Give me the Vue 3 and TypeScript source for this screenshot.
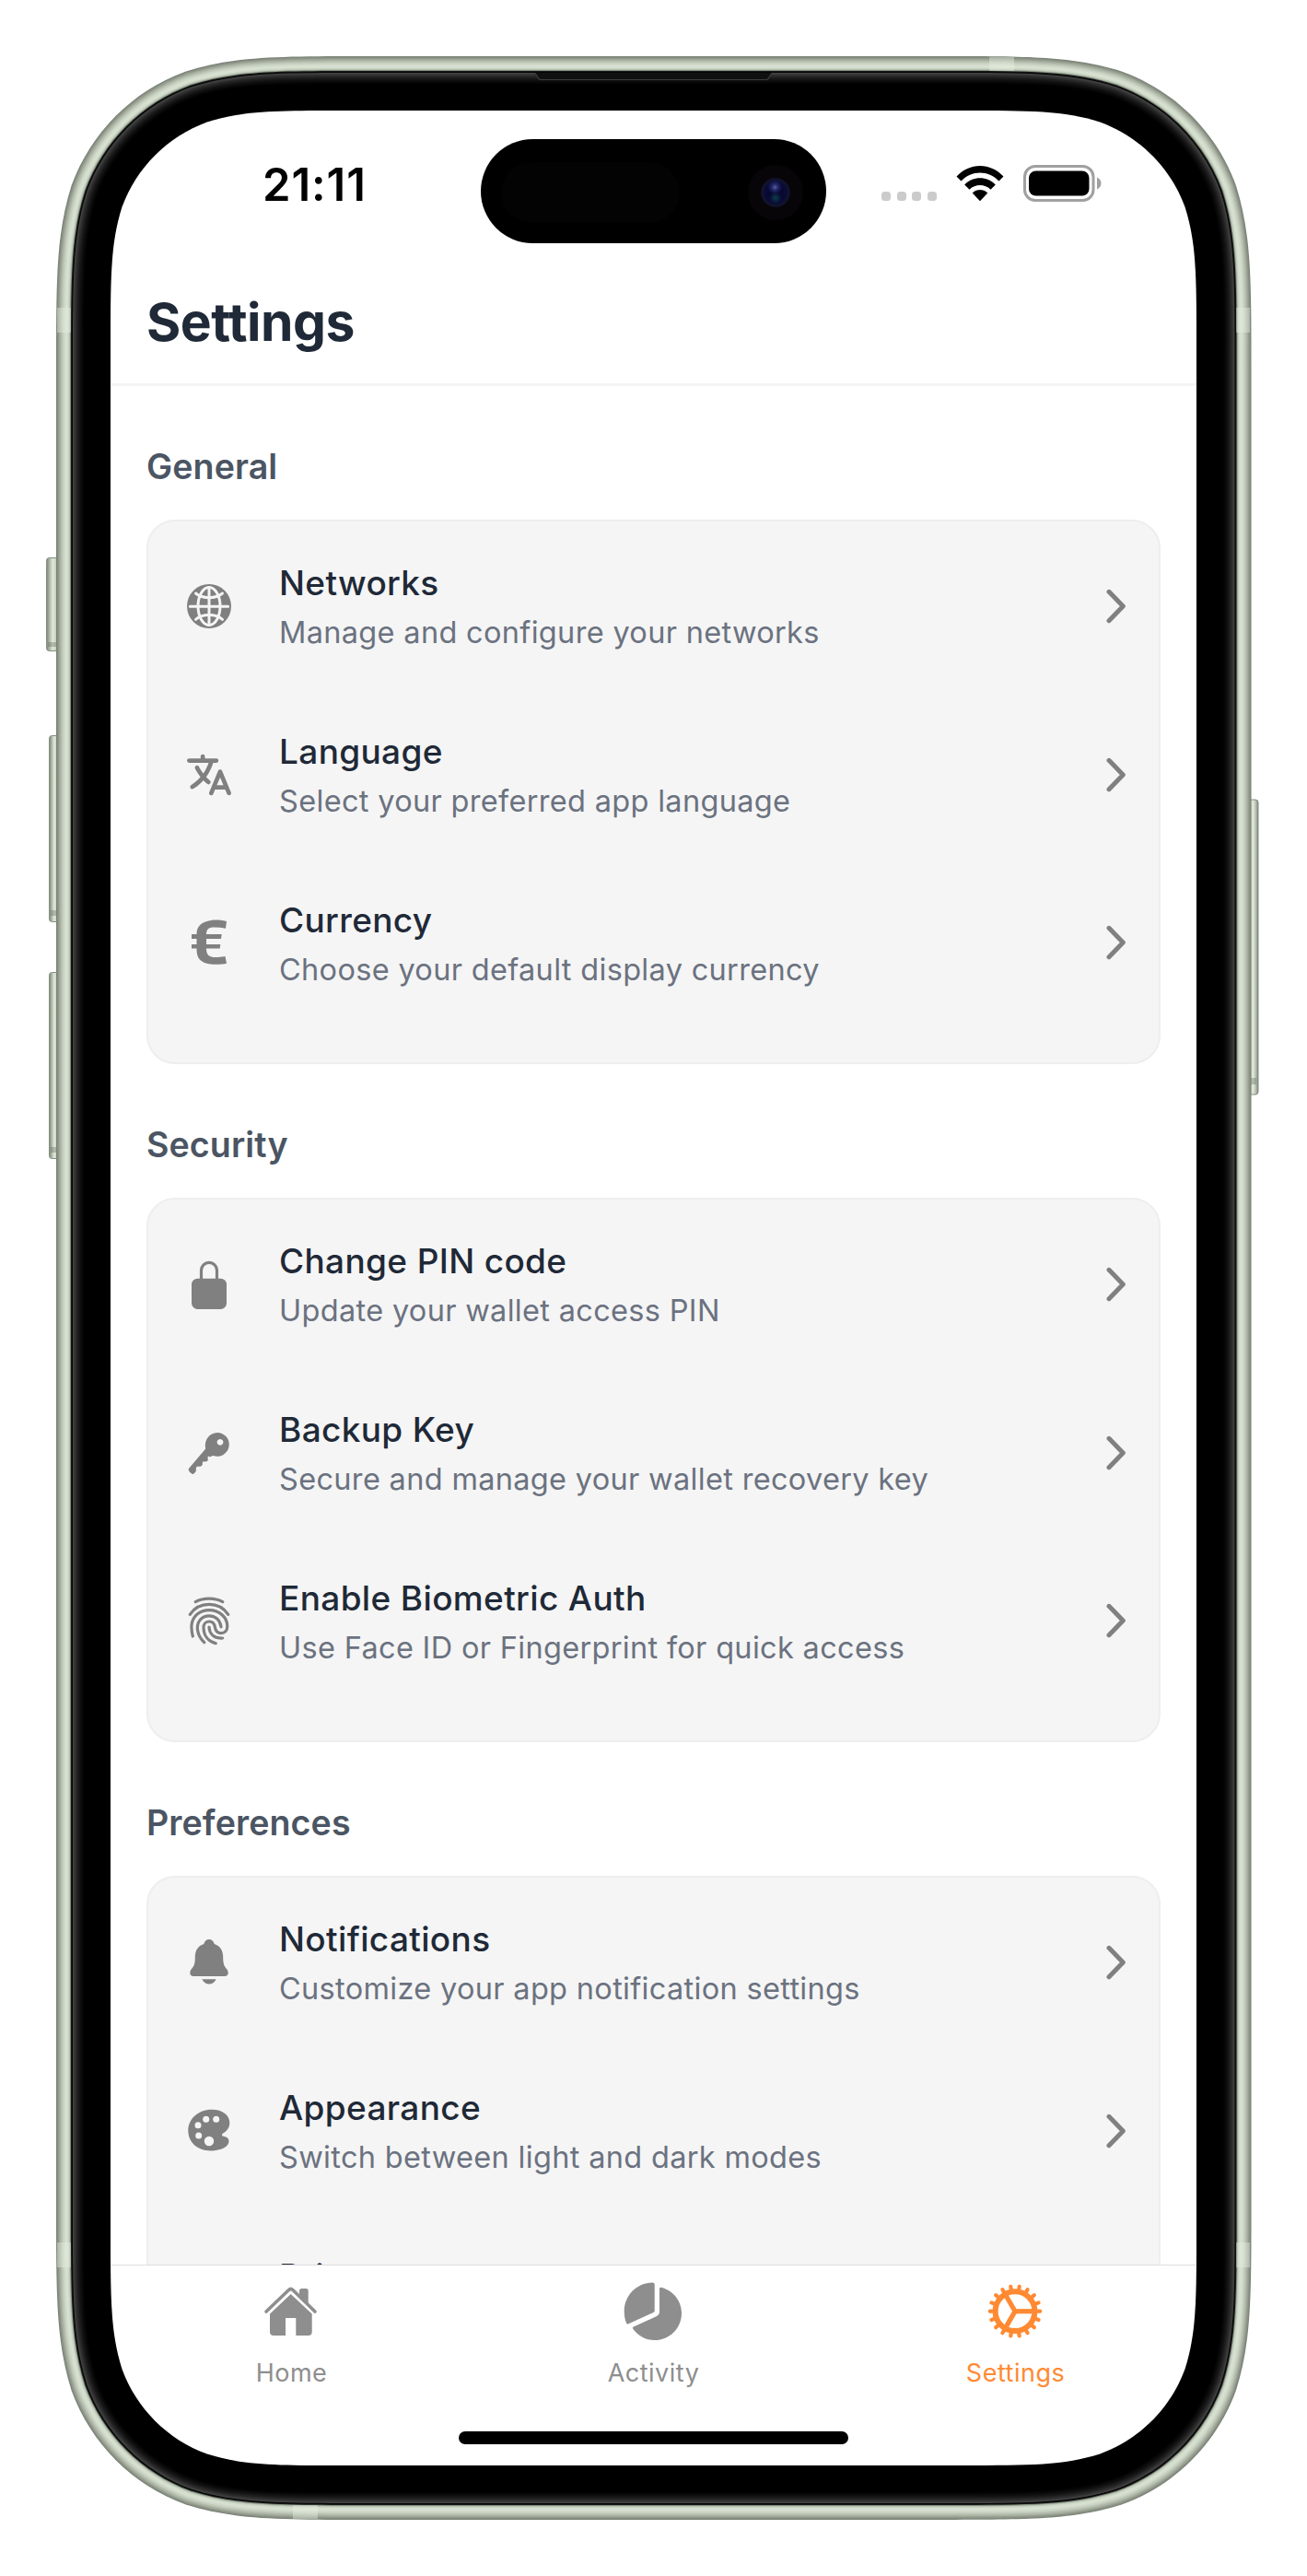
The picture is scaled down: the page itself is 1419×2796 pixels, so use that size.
<script setup lang="ts">
type IconName =
  | 'globe' | 'language' | 'euro' | 'lock' | 'key' | 'finger' | 'bell' | 'palette' | 'shield'

interface Row {
  icon: IconName
  title: string
  text: string
}

interface Section {
  heading: string
  rows: Row[]
}

const sections: Section[] = [
  {
    heading: 'General',
    rows: [
      { icon: 'globe', title: 'Networks', text: 'Manage and configure your networks' },
      { icon: 'language', title: 'Language', text: 'Select your preferred app language' },
      { icon: 'euro', title: 'Currency', text: 'Choose your default display currency' },
    ],
  },
  {
    heading: 'Security',
    rows: [
      { icon: 'lock', title: 'Change PIN code', text: 'Update your wallet access PIN' },
      { icon: 'key', title: 'Backup Key', text: 'Secure and manage your wallet recovery key' },
      { icon: 'finger', title: 'Enable Biometric Auth', text: 'Use Face ID or Fingerprint for quick access' },
    ],
  },
  {
    heading: 'Preferences',
    rows: [
      { icon: 'bell', title: 'Notifications', text: 'Customize your app notification settings' },
      { icon: 'palette', title: 'Appearance', text: 'Switch between light and dark modes' },
      { icon: 'shield', title: 'Privacy', text: '' },
    ],
  },
]

const tabs = [
  { id: 'home', label: 'Home' },
  { id: 'activity', label: 'Activity' },
  { id: 'settings', label: 'Settings' },
]

const teeth = Array.from({ length: 18 }, (_, i) => i * 20)
const spokes = [0, 120, 240]

/* Rounded rectangle with continuous-curvature corners. */
function squircle(x: number, y: number, w: number, h: number, r: number): string {
  const a = 1.52866483 * r
  const b = 1.08849296 * r
  const c = 0.86840694 * r
  const d = 0.63149379 * r
  const e = 0.07491139 * r
  const f = 0.37282383 * r
  const g = 0.16905956 * r
  const R = x + w
  const B = y + h
  return [
    `M${x + a} ${y}H${R - a}`,
    `C${R - b} ${y} ${R - c} ${y} ${R - d} ${y + e}`,
    `C${R - f} ${y + g} ${R - g} ${y + f} ${R - e} ${y + d}`,
    `C${R} ${y + c} ${R} ${y + b} ${R} ${y + a}V${B - a}`,
    `C${R} ${B - b} ${R} ${B - c} ${R - e} ${B - d}`,
    `C${R - g} ${B - f} ${R - f} ${B - g} ${R - d} ${B - e}`,
    `C${R - c} ${B} ${R - b} ${B} ${R - a} ${B}H${x + a}`,
    `C${x + b} ${B} ${x + c} ${B} ${x + d} ${B - e}`,
    `C${x + f} ${B - g} ${x + g} ${B - f} ${x + e} ${B - d}`,
    `C${x} ${B - c} ${x} ${B - b} ${x} ${B - a}V${y + a}`,
    `C${x} ${y + b} ${x} ${y + c} ${x + e} ${y + d}`,
    `C${x + g} ${y + f} ${x + f} ${y + g} ${x + d} ${y + e}`,
    `C${x + c} ${y} ${x + b} ${y} ${x + a} ${y}Z`,
  ].join('')
}

/* One colour per pixel, from the outer metal edge to the flat black glass. */
const shades = [
  '#7b8377', '#868e81', '#929a8c', '#9ea698', '#a9b1a3', '#b3bcac', '#bdc6b6', '#c6cfbf',
  '#cdd6c6', '#d3dccc', '#d7e0d0', '#d8e1d1', '#d3dccc', '#c9d3c2', '#b6c1b0', '#848e7f',
  '#161816', '#050505', '#424242', '#3a3a3a', '#323232', '#2b2b2b', '#242424', '#1e1e1e',
  '#181818', '#131313', '#0f0f0f', '#0b0b0b', '#070707', '#040404', '#000000',
]
const rings = shades.map((fill, i) => ({
  fill,
  d: squircle(61 + i, 61 + i, 1297.5 - 2 * i, 2674 - 2 * i, 222 - i),
}))
const glass = squircle(120, 120, 1179, 2556, 166)
</script>

<template>
  <main class="stage">
    <svg class="device" viewBox="0 0 1419 2796" aria-hidden="true">
      <defs>
        <linearGradient id="btnL" x1="0" x2="1" y1="0" y2="0">
          <stop offset="0" stop-color="#7d8579" />
          <stop offset=".2" stop-color="#a9b2a3" />
          <stop offset=".45" stop-color="#dfe9d9" />
          <stop offset=".75" stop-color="#c0cab9" />
          <stop offset="1" stop-color="#939c8d" />
        </linearGradient>
        <linearGradient id="btnR" x1="1" x2="0" y1="0" y2="0">
          <stop offset="0" stop-color="#7d8579" />
          <stop offset=".2" stop-color="#b4bdae" />
          <stop offset=".45" stop-color="#e2ebdc" />
          <stop offset=".75" stop-color="#bcc6b5" />
          <stop offset="1" stop-color="#939c8d" />
        </linearGradient>
      </defs>
      <rect x="50.500" y="605.500" width="15" height="101" rx="3" fill="url(#btnL)" stroke="#858d80" />
      <rect x="53.500" y="798.500" width="12" height="202" rx="3" fill="url(#btnL)" stroke="#858d80" />
      <rect x="53.500" y="1055.500" width="12" height="202" rx="3" fill="url(#btnL)" stroke="#858d80" />
      <rect x="1353.500" y="868" width="12.500" height="320" rx="3" fill="url(#btnR)" stroke="#858d80" />
      <g fill="#5f685b" opacity=".35">
        <rect x="52" y="697" width="9" height="5" />
        <rect x="55" y="988" width="6" height="6" />
        <rect x="55" y="1245" width="6" height="6" />
        <rect x="1358" y="1170" width="6" height="7" />
      </g>
      <path v-for="(r, i) in rings" :key="i" :d="r.d" :fill="r.fill" />
      <g fill="#e6efe3" opacity=".42">
        <rect x="1074" y="62" width="27" height="15" />
        <rect x="318" y="2719" width="27" height="15" />
        <rect x="62" y="334" width="15" height="27" />
        <rect x="1342" y="334" width="15" height="27" />
        <rect x="62" y="2434" width="15" height="27" />
        <rect x="1342" y="2434" width="15" height="27" />
      </g>
      <path d="M580 79C583 79 583 86.500 587 86.500H832C836 86.500 836 79 839 79Z" fill="#101010" />
      <path d="M580 79C583 79 583 86.500 587 86.500H832C836 86.500 836 79 839 79" fill="none" stroke="#3c3c3c" stroke-width="1.200" />
      <path :d="glass" fill="#fff" />
    </svg>

    <div class="screen">
      <header class="status">
        <div class="clock">21:11</div>
        <div class="island">
          <span class="sensor"></span>
          <span class="camera"><i></i></span>
        </div>
        <div class="indicators">
          <span class="dots"><i></i><i></i><i></i><i></i></span>
          <svg class="wifi" viewBox="0 0 54 40">
            <path d="M1.500 12.500C15.500-3 38.500-3 52.500 12.500L47.500 17.500C36 5.500 18 5.500 6.500 17.500Z" />
            <path d="M10.200 21.500C19.500 11.800 34.500 11.800 43.800 21.500L38.500 26.700C32 20.500 22 20.500 15.500 26.700Z" />
            <path d="M19 30.500C23.500 26.300 30.500 26.300 35 30.500L27 39Z" stroke="#000" stroke-width=".5" stroke-linejoin="round" />
          </svg>
          <svg class="battery" viewBox="0 0 86 40">
            <rect x="1.500" y="1.500" width="74.500" height="37" rx="11.500" fill="none" stroke="#a0a0a0" stroke-width="3" />
            <rect x="6" y="6.500" width="65.500" height="27" rx="7.500" />
            <path d="M80 13.500C86 16 86 24 80 26.500Z" fill="#a0a0a0" />
          </svg>
        </div>
      </header>

      <div class="titlebar"><h1>Settings</h1></div>

      <div class="content">
        <section v-for="s in sections" :key="s.heading" class="section">
          <h2>{{ s.heading }}</h2>
          <ul class="card">
            <li v-for="row in s.rows" :key="row.title" class="row">
              <svg class="icon" viewBox="0 0 60 60">
                <g v-if="row.icon === 'globe'">
                  <circle cx="30" cy="30" r="24" />
                  <g class="cut">
                    <path d="M30 9.500V50.500M9.300 30.200H50.700" />
                    <ellipse cx="30" cy="30" rx="12" ry="20.500" />
                    <path d="M15.500 16C23 22.300 37 22.300 44.500 16M15.500 44.300C23 38 37 38 44.500 44.300" />
                  </g>
                </g>
                <path
                  v-else-if="row.icon === 'language'"
                  transform="translate(2.600 2.600) scale(.107)"
                  d="M478.33 433.6l-90-218a22 22 0 00-40.67 0l-90 218a22 22 0 1040.67 16.79L316.66 406h102.67l18.33 44.39A22 22 0 00458 464a22 22 0 0020.32-30.4zM334.83 362L368 281.65 401.17 362zM267.84 342.92a22 22 0 00-4.89-30.7c-.2-.15-15-11.13-36.49-34.73 39.65-53.68 62.11-114.75 71.27-143.49H330a22 22 0 000-44H214V70a22 22 0 00-44 0v20H54a22 22 0 000 44h197.25c-9.52 26.95-27.05 69.5-53.79 108.36-31.41-41.68-43.08-68.65-43.17-68.87a22 22 0 00-40.58 17c.58 1.38 14.55 34.23 52.86 83.93.92 1.19 1.83 2.35 2.74 3.51-39.24 44.35-77.74 71.86-93.85 80.74a22 22 0 1021.07 38.63c2.16-1.18 48.6-26.89 101.63-85.59 22.52 24.08 38 35.44 38.93 36.1a22 22 0 0030.75-4.9z"
                />
                <path
                  v-else-if="row.icon === 'euro'"
                  d="M49 7C42 5.400 36 5.300 32 6C22 7.500 16.500 12 16.500 21H11V26H16.500V32H11V36.500H16.500C16.500 46 19 53.800 38 53.800C42 53.800 46 53.300 49 52.700L47.500 45C43 45.600 40 46 37 46C30 46 27 43.500 27 36.500H41.700L42.300 32H27V26H43L43.700 21H27C27 15 30 13.500 36 13.500C40 13.500 44 14 48 14.800Z"
                />
                <g v-else-if="row.icon === 'lock'">
                  <rect x="11" y="23.700" width="38" height="33.300" rx="6.500" />
                  <path class="line" d="M21.500 25V14.800a8.500 8.500 0 0 1 17 0V25" />
                </g>
                <path
                  v-else-if="row.icon === 'key'"
                  fill-rule="evenodd"
                  d="M39 7.900A12.900 12.900 0 1 1 34.700 33L33 33.300C32 34.600 30.500 34.500 29.200 33.500C28.200 34.200 28.500 35.500 28.800 37C28.800 39.600 26.500 39.700 23.800 39.300C22.600 40 23 41 22.800 42.500C22 44.800 19.800 45 17 44.800C15.600 45.500 15.900 47 15.800 49.500C15.300 51 13.500 53 12 53C10.500 52.500 8.300 50.300 7.700 48.500C7.700 47.300 8 46.800 9 45.700L26.200 25.500C24.200 15.500 30.500 8.200 39 7.900ZM42 14.900a3.400 3.400 0 1 0 .01 0Z"
                />
                <path
                  v-else-if="row.icon === 'finger'"
                  class="line"
                  d="M15.300 9.700C24 5 36 5 44.700 9.700M9.300 23.300C19 8.700 41 8.700 50.700 23.300M12.300 47C11 42 10.800 38 11 35C12 25 20 18.700 30 18.700C42 18.700 49.700 27 49.800 36C49.800 41 47 43.700 43 43.700C38.500 43.700 37 41 36.500 37.500C36 33.500 33.500 31 30 31C26 31 24 34 24 37.500C24 46 29 52.500 37.300 54.700M24.700 53.700C20 49 17.500 44 17.300 38C17.300 30 23 24.800 30 24.800C37.500 24.800 42 30 43 36.800M30 37.200C30.500 45 36 49.500 44.700 49"
                />
                <path
                  v-else-if="row.icon === 'bell'"
                  d="M30 5C27 5 25 7 24.300 10C18 12 14.800 17 14.800 24C14.800 32 13.500 34 11 37C9.500 39 9.300 40 9.300 41.500C9.300 43.500 10.800 45 13 45H47C49.200 45 50.700 43.500 50.700 41.500C50.700 40 50.500 39 49 37C46.500 34 45.200 32 45.200 24C45.200 17 42 12 35.700 10C35 7 33 5 30 5ZM22.300 48.200H37.700C36 51.700 33 53.400 30 53.400S24 51.700 22.300 48.200Z"
                />
                <g v-else-if="row.icon === 'palette'">
                  <path d="M33 6.700C45 6.700 52.300 13 52.300 21C52.300 27 49 30 45.500 32.300C43.300 33.700 43.600 35.300 45.800 35.700C49.500 36.300 51.500 38 51.500 41C51.500 47 43 51.400 32 51.400C17 51.400 7.300 42 7.300 29.500C7.300 17 18 6.700 33 6.700Z" />
                  <g fill="#f5f5f5">
                    <circle cx="18" cy="23.700" r="3.500" />
                    <circle cx="26.700" cy="17.300" r="3.500" />
                    <circle cx="37.700" cy="17.300" r="3.500" />
                    <circle cx="18.700" cy="35" r="3.500" />
                    <circle cx="30" cy="41" r="5.200" />
                  </g>
                </g>
              </svg>
              <div class="copy">
                <h3>{{ row.title }}</h3>
                <p>{{ row.text }}</p>
              </div>
              <svg class="chevron" viewBox="0 0 22 38">
                <path d="M3 3.300L18.300 19L3 34.700" />
              </svg>
            </li>
          </ul>
        </section>
      </div>

      <footer class="tabbar">
        <nav>
          <a v-for="t in tabs" :key="t.id" :class="['tab', { active: t.id === 'settings' }]">
            <svg viewBox="0 0 72 72">
              <g v-if="t.id === 'home'">
                <path d="M45 14.500Q45 12 47.500 12H52.200Q54.700 12 54.700 14.500V29L45 20Z" />
                <path d="M9 37L33.500 13.500Q35.700 11.500 37.900 13.500L62 37" fill="none" stroke="currentColor" stroke-width="3.600" stroke-linecap="round" />
                <path d="M35.700 18L58.700 39.500V59Q58.700 63 54.700 63H41.300V44H30V63H17Q13 63 13 59V39.500Z" />
              </g>
              <g v-else-if="t.id === 'activity'">
                <path d="M37.700 7.500Q37.700 5.600 35.600 5.600C18 6 4.700 19.500 4.700 37C4.700 41.500 5.500 45.500 7 49.300Q7.600 51 9.400 50.300L36.300 38Q37.700 37.300 37.700 36Z" />
                <path d="M43 12.300Q43 10.300 45 10.800C58 14.300 67 25.500 67 38.700C67 55 54 68 37.700 68C28 68 20 63.300 14.300 56Q13.100 54.200 14.800 53.500L39 42.600Q43 40.700 43 37Z" />
              </g>
              <g v-else fill="none" stroke="currentColor">
                <circle cx="36" cy="36.700" r="21.400" stroke-width="6" />
                <path
                  v-for="a in teeth"
                  :key="'t' + a"
                  d="M58.500 36.700H63.200"
                  stroke-width="4.200"
                  stroke-linecap="round"
                  :transform="`rotate(${a} 36 36.700)`"
                />
                <path
                  v-for="a in spokes"
                  :key="'s' + a"
                  d="M35 36.700H57"
                  stroke-width="5.200"
                  :transform="`rotate(${a} 36 36.700)`"
                />
              </g>
            </svg>
            <span>{{ t.label }}</span>
          </a>
        </nav>
        <div class="grip"></div>
      </footer>
    </div>
  </main>
</template>

<style>
body {
  background: #fff;
}
</style>

<style scoped>
.stage {
  position: relative;
  width: 1419px;
  height: 2796px;
  box-sizing: border-box;
  padding: 120px;
  font-family: Inter, "Liberation Sans", sans-serif;
  overflow: hidden;
}
.device {
  position: absolute;
  inset: 0;
  width: 1419px;
  height: 2796px;
}
.screen {
  position: relative;
  width: 1179px;
  height: 2556px;
  display: flex;
  flex-direction: column;
}
h1, h2, h3, p, ul {
  margin: 0;
  padding: 0;
  font-weight: inherit;
  list-style: none;
}
.status {
  flex: none;
  height: 177px;
  display: flex;
  align-items: flex-start;
  padding-top: 31px;
  box-sizing: border-box;
}
.clock {
  width: 402px;
  box-sizing: border-box;
  padding-left: 165px;
  margin-top: 20px;
  font-size: 49px;
  line-height: 60px;
  font-weight: 600;
  letter-spacing: 0.9px;
  color: #000;
  white-space: nowrap;
}
.island {
  width: 375px;
  height: 113px;
  box-sizing: border-box;
  border-radius: 57px;
  background: #000;
  display: flex;
  justify-content: space-between;
  align-items: center;
  padding: 2px 25px 0 22px;
}
.sensor {
  width: 194px;
  height: 66px;
  border-radius: 33px;
  background: #030303;
}
.camera {
  width: 60px;
  height: 60px;
  border-radius: 50%;
  background: #070508;
  display: flex;
  align-items: center;
  justify-content: center;
}
.camera i {
  width: 32px;
  height: 32px;
  border-radius: 50%;
  background:
    radial-gradient(circle at 48% 32%, #5a5f9c 0, #23286a 12%, transparent 28%),
    radial-gradient(circle at 50% 68%, #0a4048 0, transparent 24%),
    radial-gradient(circle, #05052a 0, #0a0a38 50%, #11142c 62%, #070714 100%);
}
.indicators {
  display: flex;
  align-items: flex-start;
  margin-left: 60px;
  padding-top: 28px;
}
.dots {
  display: flex;
  gap: 6.600px;
  margin-top: 29px;
  width: 80px;
}
.dots i {
  width: 10px;
  height: 10px;
  border-radius: 3.500px;
  background: #cbcbcb;
}
.wifi {
  width: 54px;
  height: 40px;
}
.battery {
  width: 86px;
  height: 40px;
  margin-left: 20px;
}
.titlebar {
  flex: none;
  height: 122px;
  box-sizing: border-box;
  border-bottom: 3px solid #f4f4f5;
  padding: 16px 39px 0;
}
.titlebar h1 {
  font-size: 57px;
  line-height: 74px;
  font-weight: 700;
  letter-spacing: -0.5px;
  font-feature-settings: "liga" 0, "calt" 0;
  color: #1f2937;
}
.content {
  flex: none;
  height: 2039px;
  overflow: hidden;
  padding: 0 39px;
}
.section h2 {
  height: 145px;
  box-sizing: border-box;
  padding-top: 63px;
  font-size: 37.600px;
  line-height: 50px;
  font-weight: 600;
  letter-spacing: 0.1px;
  color: #4b5563;
}
.card {
  height: 591px;
  box-sizing: border-box;
  border: 2px solid #eeeeee;
  border-radius: 31px;
  background: #f5f5f5;
  padding: 0.500px 35px 0 36px;
}
.row {
  height: 182.700px;
  display: flex;
  align-items: center;
}
.icon {
  flex: none;
  width: 60px;
  height: 60px;
  fill: #808080;
}
.icon .cut {
  fill: none;
  stroke: #f5f5f5;
  stroke-width: 3;
  stroke-linecap: round;
}
.icon .line {
  fill: none;
  stroke: #808080;
  stroke-width: 3.200;
  stroke-linecap: round;
}
.copy {
  flex: 1;
  margin-left: 46px;
  padding-top: 5px;
  white-space: nowrap;
}
.copy h3 {
  font-size: 37px;
  line-height: 50px;
  font-weight: 500;
  letter-spacing: 0.35px;
  color: #1f2937;
}
.copy p {
  height: 54px;
  font-size: 32.500px;
  line-height: 57px;
  font-weight: 400;
  letter-spacing: 0.32px;
  color: #6b7280;
}
.chevron {
  flex: none;
  width: 22px;
  height: 38px;
  fill: none;
  stroke: #808080;
  stroke-width: 5;
  stroke-linecap: round;
  stroke-linejoin: round;
}
.tabbar {
  flex: 1;
  border-top: 1.500px solid #dedede;
  display: flex;
  flex-direction: column;
  align-items: center;
}
.tabbar nav {
  display: flex;
  width: 100%;
  height: 180px;
}
.tab {
  flex: 1;
  display: flex;
  flex-direction: column;
  align-items: center;
  padding-top: 13px;
  color: #8e8e8e;
}
.tab.active {
  color: #ff8a33;
}
.tab svg {
  width: 72px;
  height: 72px;
  margin-right: 2px;
  fill: currentColor;
}
.tab span {
  margin-top: 14px;
  font-size: 27px;
  line-height: 36px;
  letter-spacing: 0.5px;
}
.grip {
  width: 423px;
  height: 14px;
  border-radius: 7px;
  background: #000;
}
</style>
